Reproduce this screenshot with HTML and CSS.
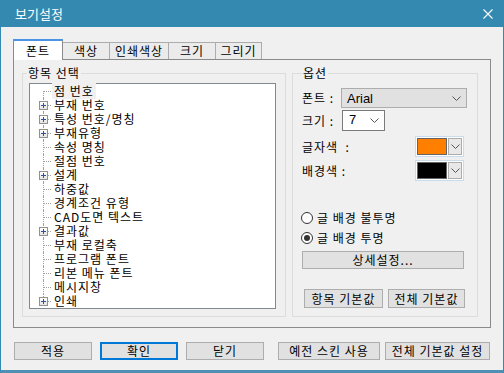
FILE: index.html
```html
<!DOCTYPE html>
<html>
    <head>
        <title>보기설정</title>
        <link rel="stylesheet" href="styles.css">
    </head>
    <body>
        <div class="window">
            <div class="titlebar">
                <span class="title">보기설정</span>
                <svg class="close" width="10" height="10" viewBox="0 0 10 10">
                    <path d="M0.5 0.5 L9.5 9.5 M9.5 0.5 L0.5 9.5" stroke="#fff" stroke-width="1.1" fill="none"/>
                </svg>
            </div>

            <div class="content">
                <div class="tabs">
                    <div class="tab active" style="width:50px">폰트</div>
                    <div class="tab" style="width:48px">색상</div>
                    <div class="tab" style="width:60px">인쇄색상</div>
                    <div class="tab" style="width:48px">크기</div>
                    <div class="tab" style="width:47px">그리기</div>
                </div>

                <div class="panel">
                    <fieldset class="group items">
                        <legend>항목 선택</legend>
                        <ul class="tree">
                            <li><span class="label selected">점 번호</span></li>
                            <li><span class="plus"></span><span class="label">부재 번호</span></li>
                            <li><span class="plus"></span><span class="label">특성 번호/명칭</span></li>
                            <li><span class="plus"></span><span class="label">부재유형</span></li>
                            <li><span class="label">속성 명칭</span></li>
                            <li><span class="label">절점 번호</span></li>
                            <li><span class="plus"></span><span class="label">설계</span></li>
                            <li><span class="label">하중값</span></li>
                            <li><span class="label">경계조건 유형</span></li>
                            <li><span class="label">CAD도면 텍스트</span></li>
                            <li><span class="plus"></span><span class="label">결과값</span></li>
                            <li><span class="label">부재 로컬축</span></li>
                            <li><span class="label">프로그램 폰트</span></li>
                            <li><span class="label">리본 메뉴 폰트</span></li>
                            <li><span class="label">메시지창</span></li>
                            <li><span class="plus"></span><span class="label">인쇄</span></li>
                        </ul>
                    </fieldset>

                    <fieldset class="group options">
                        <legend>옵션</legend>

                        <div class="row font-row">
                            <span class="row-label">폰트 :</span>
                            <div class="combo gray">
                                <span class="combo-text">Arial</span>
                                <svg width="9" height="5" viewBox="0 0 9 5"><path d="M0.5 0.5 L4.5 4.5 L8.5 0.5" stroke="#555" fill="none"/></svg>
                            </div>
                        </div>

                        <div class="row size-row">
                            <span class="row-label">크기 :</span>
                            <div class="combo white">
                                <span class="combo-text">7</span>
                                <svg width="9" height="5" viewBox="0 0 9 5"><path d="M0.5 0.5 L4.5 4.5 L8.5 0.5" stroke="#555" fill="none"/></svg>
                            </div>
                        </div>

                        <div class="row color-row first">
                            <span class="row-label">글자색&nbsp;&nbsp;:</span>
                            <div class="colorpick">
                                <span class="swatch orange"></span>
                                <span class="drop"><svg width="9" height="5" viewBox="0 0 9 5"><path d="M0.5 0.5 L4.5 4.5 L8.5 0.5" stroke="#555" fill="none"/></svg></span>
                            </div>
                        </div>

                        <div class="row color-row">
                            <span class="row-label">배경색 :</span>
                            <div class="colorpick">
                                <span class="swatch black"></span>
                                <span class="drop"><svg width="9" height="5" viewBox="0 0 9 5"><path d="M0.5 0.5 L4.5 4.5 L8.5 0.5" stroke="#555" fill="none"/></svg></span>
                            </div>
                        </div>

                        <div class="radio-row first"><span class="radio"></span>글 배경 불투명</div>
                        <div class="radio-row"><span class="radio checked"></span>글 배경 투명</div>

                        <button class="btn detail">상세설정...</button>

                        <div class="default-row">
                            <button class="btn" style="width:79px">항목 기본값</button>
                            <button class="btn" style="width:77px">전체 기본값</button>
                        </div>
                    </fieldset>
                </div>

                <div class="bottom">
                    <button class="btn" style="width:78px">적용</button>
                    <button class="btn primary" style="width:78px">확인</button>
                    <button class="btn" style="width:78px">닫기</button>
                    <button class="btn wide-gap" style="width:102px">예전 스킨 사용</button>
                    <button class="btn" style="width:105px">전체 기본값 설정</button>
                </div>
            </div>
        </div>
    </body>
</html>
```

FILE: styles.css
```css
body{
    margin: 0;
    font-family: "Noto Sans CJK KR", "DejaVu Sans", sans-serif;
    font-size: 12px;
    letter-spacing: 1px;
    color: #000;
}
.window{
    width: 504px;
    height: 373px;
    box-sizing: border-box;
    background-color: #f0f0f0;
    border-left: 1px solid #3489b1;
    border-right: 1px solid #3489b1;
    border-bottom: 3px solid #4f8fb3;
    overflow: hidden;
}
.titlebar{
    height: 27px;
    background-color: #3489b1;
    color: white;
    display: flex;
    align-items: center;
    justify-content: space-between;
    padding: 0 10px 0 14px;
}
.title{
    font-size: 13px;
    line-height: 16px;
    letter-spacing: 0;
}
.content{
    padding: 12px 12px 0 12px;
}
.tabs{
    display: flex;
    align-items: flex-end;
    height: 20px;
}
.tab{
    box-sizing: border-box;
    height: 17px;
    line-height: 15px;
    text-align: center;
    background-color: #ebebeb;
    border: 1px solid #acacac;
    border-bottom: none;
    margin-right: -1px;
}
.tab.active{
    height: 21px;
    line-height: 19px;
    background-color: white;
    border: 1px solid #8a8a8a;
    border-top: 2px solid #4a94e6;
    border-bottom: none;
    margin-bottom: -1px;
    position: relative;
    z-index: 1;
}
.panel{
    box-sizing: border-box;
    width: 478px;
    height: 269px;
    border: 1px solid #8a8a8a;
    display: flex;
    padding: 6px 0 0 8px;
    gap: 6px;
}
.group{
    box-sizing: border-box;
    margin: 0;
    padding: 0;
    border: 1px solid #dcdcdc;
    height: 251px;
}
.group legend{
    padding: 0 1px;
    margin-left: 4px;
    line-height: 14px;
}
.items{
    width: 264px;
}
.tree{
    list-style: none;
    margin: 3px 0 0 6px;
    padding: 0;
    width: 247px;
    height: 226px;
    box-sizing: border-box;
    background-color: white;
    border: 1px solid #828790;
}
.tree li{
    position: relative;
    height: 14px;
    line-height: 14px;
    padding-left: 22px;
    white-space: nowrap;
}
.tree li::before{
    content: "";
    position: absolute;
    left: 13px;
    top: 7px;
    width: 8px;
    border-top: 1px dotted #a0a0a0;
}
.tree li::after{
    content: "";
    position: absolute;
    left: 13px;
    top: 0;
    height: 14px;
    border-left: 1px dotted #a0a0a0;
}
.tree li:first-child::after{
    top: 7px;
    height: 7px;
}
.tree li:last-child::after{
    height: 7px;
}
.label{
    padding: 0 2px;
}
.label.selected{
    background-color: #f0f0f0;
}
.plus{
    position: absolute;
    left: 9px;
    top: 3px;
    width: 9px;
    height: 9px;
    box-sizing: border-box;
    border: 1px solid #919191;
    background: linear-gradient(#ffffff, #e4e4e4);
    z-index: 1;
}
.plus::before,.plus::after{
    content: "";
    position: absolute;
    background-color: #2a53a4;
}
.plus::before{
    left: 1px;
    top: 3px;
    width: 5px;
    height: 1px;
}
.plus::after{
    left: 3px;
    top: 1px;
    width: 1px;
    height: 5px;
}
.options{
    width: 186px;
    padding-left: 9px;
}
.options legend{
    margin-left: 0;
}
.row{
    display: flex;
    align-items: center;
}
.row-label{
    line-height: 14px;
}
.font-row{
    margin-top: 8px;
    height: 20px;
}
.font-row .row-label{
    width: 39px;
}
.size-row{
    margin-top: 2px;
    height: 21px;
}
.size-row .row-label{
    width: 40px;
}
.combo{
    box-sizing: border-box;
    height: 100%;
    display: flex;
    align-items: center;
    justify-content: space-between;
    padding: 0 5px 0 5px;
    font-family: "Liberation Sans", Arial, sans-serif;
    font-size: 13px;
    letter-spacing: 0;
}
.combo.gray{
    width: 126px;
    background-color: #e1e1e1;
    border: 1px solid #adadad;
}
.combo.white{
    width: 43px;
    background-color: white;
    border: 1px solid #7a7a7a;
    padding-left: 6px;
}
.combo.white .combo-text{
    margin-top: -3px;
}
.color-row{
    justify-content: space-between;
    width: 162px;
    height: 19px;
    margin-top: 5px;
}
.color-row.first{
    margin-top: 6px;
}
.colorpick{
    display: flex;
    gap: 1px;
    padding: 1px;
    border: 1px solid #c9dcee;
    background-color: white;
}
.swatch{
    width: 28px;
    height: 15px;
    border: 1px solid #646464;
}
.swatch.orange{
    background-color: #ff8000;
}
.swatch.black{
    background-color: #000;
}
.drop{
    box-sizing: border-box;
    width: 14px;
    height: 17px;
    border: 1px solid #adadad;
    background-color: #e8e8e8;
    display: flex;
    align-items: center;
    justify-content: center;
}
.radio-row{
    display: flex;
    align-items: center;
    height: 14px;
    line-height: 14px;
    margin-top: 6px;
    margin-left: -1px;
}
.radio-row.first{
    margin-top: 31px;
}
.radio{
    box-sizing: border-box;
    width: 12px;
    height: 12px;
    border: 1px solid #333;
    border-radius: 50%;
    background-color: white;
    margin-right: 4px;
    position: relative;
}
.radio.checked::after{
    content: "";
    position: absolute;
    left: 2px;
    top: 2px;
    width: 6px;
    height: 6px;
    border-radius: 50%;
    background-color: #333;
}
.btn{
    box-sizing: border-box;
    height: 18px;
    padding: 0;
    background-color: #e1e1e1;
    border: 1px solid #adadad;
    font-family: "Noto Sans CJK KR", "DejaVu Sans", sans-serif;
    font-size: 12px;
    line-height: 14px;
    letter-spacing: 1px;
    color: #000;
}
.btn.detail{
    display: block;
    width: 162px;
    margin-top: 6px;
}
.default-row{
    display: flex;
    gap: 5px;
    margin-top: 20px;
    margin-left: 2px;
}
.default-row .btn{
    height: 19px;
}
.bottom{
    display: flex;
    gap: 8px;
    margin-top: 14px;
    margin-left: 1px;
}
.btn.primary{
    border: 2px solid #0078d7;
}
.btn.wide-gap{
    margin-left: 6px;
}
.bottom .btn:last-child{
    margin-left: -3px;
}
```
